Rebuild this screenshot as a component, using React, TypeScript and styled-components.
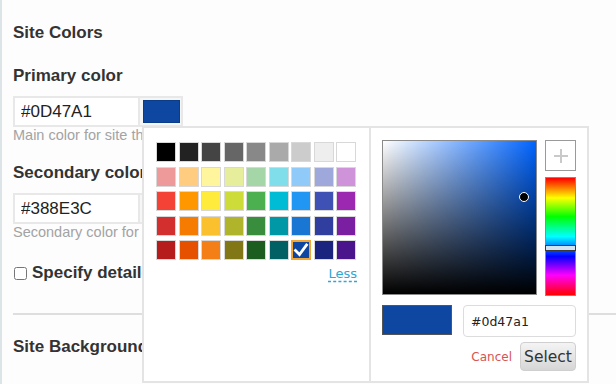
import React, { FC } from 'react';
import styled, { createGlobalStyle } from 'styled-components';

const GlobalStyle = createGlobalStyle`
  html, body {
    margin: 0;
    background: #fdfdfd;
  }
  body {
    font-family: 'Liberation Sans', Arial, sans-serif;
    color: #333;
  }
`;

const PALETTE = [
  ['#000000', '#222222', '#444444', '#666666', '#888888', '#aaaaaa', '#cccccc', '#eeeeee', '#ffffff'],
  ['#ef9a9a', '#ffcc80', '#fff59d', '#e6ee9c', '#a5d6a7', '#80deea', '#90caf9', '#9fa8da', '#ce93d8'],
  ['#f44336', '#ff9800', '#ffeb3b', '#cddc39', '#4caf50', '#00bcd4', '#2196f3', '#3f51b5', '#9c27b0'],
  ['#d32f2f', '#f57c00', '#fbc02d', '#afb42b', '#388e3c', '#0097a7', '#1976d2', '#303f9f', '#7b1fa2'],
  ['#b71c1c', '#e65100', '#f57f17', '#827717', '#1b5e20', '#006064', '#0d47a1', '#1a237e', '#4a148c'],
];

const toHsv = (hex: string) => {
  const r = parseInt(hex.slice(1, 3), 16) / 255;
  const g = parseInt(hex.slice(3, 5), 16) / 255;
  const b = parseInt(hex.slice(5, 7), 16) / 255;
  const max = Math.max(r, g, b);
  const min = Math.min(r, g, b);
  const d = max - min;
  let h = 0;
  if (d) {
    if (max === r) h = ((g - b) / d) % 6;
    else if (max === g) h = (b - r) / d + 2;
    else h = (r - g) / d + 4;
  }
  h = (h * 60 + 360) % 360;
  return { h, s: max ? d / max : 0, v: max };
};

const Page = styled.div`
  position: relative;
  width: 616px;
  height: 384px;
  overflow: hidden;
  box-sizing: border-box;
  border-left: 2px solid #dde4e8;
  padding: 23px 0 0 11px;
  background: #fdfdfd;
`;

const SectionTitle = styled.h3`
  margin: 0 0 23px;
  font-size: 17px;
  line-height: 20px;
  font-weight: bold;
  color: #333;
`;

const Field = styled.div`
  margin-bottom: 20px;
`;

const Label = styled.label`
  display: block;
  margin-bottom: 10px;
  font-size: 17px;
  line-height: 20px;
  font-weight: bold;
  color: #333;
`;

const InputRow = styled.div`
  display: flex;
  height: 31px;
`;

const TextInput = styled.input`
  width: 127px;
  height: 31px;
  box-sizing: border-box;
  border: 2px solid #e8e8e8;
  padding: 0 6px;
  font-family: 'Liberation Sans', Arial, sans-serif;
  font-size: 17px;
  color: #222;
  background: #fff;
  outline: none;
`;

const SwatchButton = styled.button`
  width: 43px;
  height: 31px;
  box-sizing: border-box;
  border: 2px solid #e8e8e8;
  border-left: 0;
  padding: 2px 1px 2px 3px;
  background: #f6f6f6;
`;

const SwatchFill = styled.span<{ $color: string }>`
  display: block;
  width: 100%;
  height: 100%;
  box-sizing: border-box;
  border: 1px solid rgba(0, 0, 0, 0.15);
  background: ${(p) => p.$color};
`;

const Helper = styled.div`
  font-size: 14.5px;
  line-height: 16px;
  color: #a3a3a3;
  white-space: nowrap;
`;

const CheckRow = styled.label`
  display: flex;
  align-items: center;
  gap: 5px;
  margin-top: 23px;
  font-size: 17px;
  line-height: 20px;
  font-weight: bold;
  color: #333;
  white-space: nowrap;

  input {
    width: 13px;
    height: 13px;
    margin: 0 0 0 1px;
  }
`;

const Divider = styled.hr`
  margin: 30px 0 22px;
  border: 0;
  height: 2px;
  background: #dedede;
`;

const Popup = styled.div`
  position: absolute;
  left: 140px;
  top: 126px;
  width: 447px;
  height: 257px;
  box-sizing: border-box;
  display: flex;
  border: 2px solid #e4e4e4;
  background: #fff;
`;

const PalettePanel = styled.div`
  flex: 0 0 227px;
  box-sizing: border-box;
  padding: 14px 0 0 12px;
  border-right: 2px solid #e4e4e4;
`;

const SwatchGrid = styled.div`
  display: grid;
  grid-template-columns: repeat(9, 20px);
  grid-auto-rows: 20px;
  column-gap: 2.5px;
  row-gap: 4.5px;
  width: 200px;
`;

const Swatch = styled.div<{ $color: string; $selected?: boolean }>`
  box-sizing: border-box;
  display: flex;
  align-items: center;
  justify-content: center;
  background: ${(p) => p.$color};
  border: ${(p) => (p.$selected ? '2px solid #f3a632' : '1px solid #d8d8d8')};
`;

const LessLink = styled.a`
  display: block;
  width: 201px;
  margin-top: 6px;
  text-align: right;
  font-family: 'DejaVu Sans', Verdana, sans-serif;
  font-size: 13px;
  line-height: 16px;
  color: #31a5d3;
  text-decoration: underline dashed;
  text-underline-offset: 3px;
`;

const PickerPanel = styled.div`
  flex: 1;
  box-sizing: border-box;
  padding: 12px 11px 0 11px;
  font-family: 'DejaVu Sans', Verdana, sans-serif;
`;

const PickerTop = styled.div`
  display: flex;
  gap: 8px;
`;

const SvSquare = styled.div<{ $hue: number }>`
  position: relative;
  width: 155px;
  height: 155px;
  box-sizing: border-box;
  border: 1px solid #8a8a8a;
  background: linear-gradient(to top, #000, rgba(0, 0, 0, 0)),
    linear-gradient(to right, #fff, hsl(${(p) => p.$hue}, 100%, 50%));
`;

const SvMarker = styled.span`
  position: absolute;
  width: 8px;
  height: 8px;
  margin: -5px 0 0 -5px;
  border-radius: 50%;
  border: 1px solid #fff;
  background: #000;
`;

const SideColumn = styled.div`
  display: flex;
  flex-direction: column;
  gap: 6px;
  width: 31px;
`;

const PlusBox = styled.button`
  height: 31px;
  box-sizing: border-box;
  padding: 0;
  display: flex;
  align-items: center;
  justify-content: center;
  border: 1px solid #9a9a9a;
  background: #fff;
`;

const HueBar = styled.div`
  position: relative;
  height: 119px;
  box-sizing: border-box;
  border: 1px solid #8a8a8a;
  background: linear-gradient(
    to bottom,
    #f00 0%,
    #ff0 17%,
    #0f0 33%,
    #0ff 50%,
    #00f 67%,
    #f0f 83%,
    #f00 100%
  );
`;

const HueHandle = styled.span`
  position: absolute;
  left: -1px;
  right: -1px;
  height: 6px;
  margin-top: -3px;
  box-sizing: border-box;
  border: 1px solid #3a3a3a;
  background: #d2e4f4;
`;

const PickerBottom = styled.div`
  display: flex;
  justify-content: space-between;
  margin-top: 9px;
`;

const Preview = styled.div<{ $color: string }>`
  width: 70px;
  height: 30px;
  box-sizing: border-box;
  border: 1px solid #555;
  background: ${(p) => p.$color};
`;

const HexInput = styled.input`
  width: 113px;
  height: 32px;
  box-sizing: border-box;
  padding: 0 7px;
  border: 1px solid #dcdcdc;
  border-radius: 4px;
  font-family: 'DejaVu Sans', Verdana, sans-serif;
  font-size: 12.5px;
  color: #222;
  outline: none;
`;

const Actions = styled.div`
  display: flex;
  justify-content: flex-end;
  align-items: center;
  gap: 8px;
  margin-top: 5px;
`;

const CancelButton = styled.button`
  padding: 0;
  border: 0;
  background: none;
  font-family: 'DejaVu Sans', Verdana, sans-serif;
  font-size: 12px;
  color: #d9534f;
`;

const SelectButton = styled.button`
  width: 56px;
  height: 29px;
  padding: 0;
  border: 1px solid #cfcfcf;
  border-radius: 4px;
  background: linear-gradient(to bottom, #f4f4f4, #d6d6d6);
  font-family: 'DejaVu Sans', Verdana, sans-serif;
  font-size: 15.5px;
  color: #333;
`;

const ColorField: FC<{ label: string; value: string; help: string }> = ({ label, value, help }) => (
  <Field>
    <Label>{label}</Label>
    <InputRow>
      <TextInput defaultValue={value} />
      <SwatchButton>
        <SwatchFill $color={value} />
      </SwatchButton>
    </InputRow>
    <Helper>{help}</Helper>
  </Field>
);

const Check = () => (
  <svg width="16" height="16" viewBox="0 0 16 16">
    <path d="M2.5 8.5 L6.5 12.5 L13.5 3" fill="none" stroke="#fff" strokeWidth="2.8" strokeLinecap="square" />
  </svg>
);

const Plus = () => (
  <svg width="16" height="16" viewBox="0 0 16 16">
    <path d="M8 1 V15 M1 8 H15" stroke="#c9c9c9" strokeWidth="2" />
  </svg>
);

const ColorPopup: FC<{ value: string }> = ({ value }) => {
  const { h, s, v } = toHsv(value);
  return (
    <Popup>
      <PalettePanel>
        <SwatchGrid>
          {PALETTE.flat().map((c) => (
            <Swatch key={c} $color={c} $selected={c === value}>
              {c === value && <Check />}
            </Swatch>
          ))}
        </SwatchGrid>
        <LessLink>Less</LessLink>
      </PalettePanel>
      <PickerPanel>
        <PickerTop>
          <SvSquare $hue={h}>
            <SvMarker style={{ left: `${s * 100}%`, top: `${(1 - v) * 100}%` }} />
          </SvSquare>
          <SideColumn>
            <PlusBox>
              <Plus />
            </PlusBox>
            <HueBar>
              <HueHandle style={{ top: `${(h / 360) * 100}%` }} />
            </HueBar>
          </SideColumn>
        </PickerTop>
        <PickerBottom>
          <Preview $color={value} />
          <HexInput defaultValue={value} />
        </PickerBottom>
        <Actions>
          <CancelButton>Cancel</CancelButton>
          <SelectButton>Select</SelectButton>
        </Actions>
      </PickerPanel>
    </Popup>
  );
};

const App: FC = () => (
  <Page>
    <GlobalStyle />
    <SectionTitle>Site Colors</SectionTitle>
    <ColorField label="Primary color" value="#0D47A1" help="Main color for site theme" />
    <ColorField label="Secondary color" value="#388E3C" help="Secondary color for site theme" />
    <CheckRow>
      <input type="checkbox" />
      Specify detailed colors
    </CheckRow>
    <Divider />
    <SectionTitle>Site Background</SectionTitle>
    <ColorPopup value="#0d47a1" />
  </Page>
);

export default App;
